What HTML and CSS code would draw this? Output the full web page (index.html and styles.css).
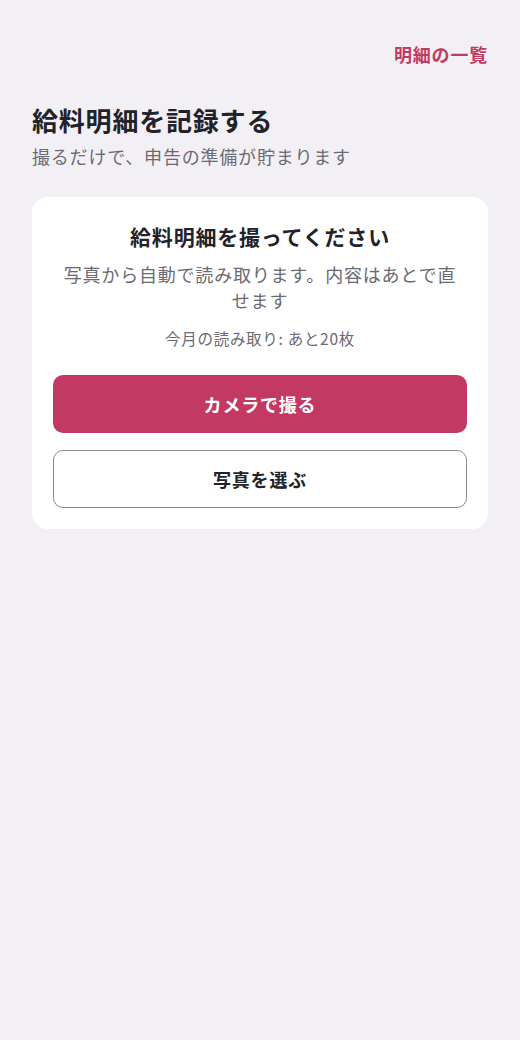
FILE: index.html
```html
<!DOCTYPE html>
<html lang="ja">
<head>
<meta charset="utf-8">
<title>給料明細を記録する</title>
<link rel="stylesheet" href="styles.css">
</head>
<body>
<div class="page">
  <header class="topbar">
    <a class="list-link" href="#">明細の一覧</a>
  </header>
  <section class="intro">
    <h1 class="title">給料明細を記録する</h1>
    <p class="subtitle">撮るだけで、申告の準備が貯まります</p>
  </section>
  <section class="card">
    <h2 class="card-title">給料明細を撮ってください</h2>
    <p class="card-desc">写真から自動で読み取ります。内容はあとで直せます</p>
    <p class="card-count">今月の読み取り: あと20枚</p>
    <div class="actions">
      <button class="btn btn-primary" type="button">カメラで撮る</button>
      <button class="btn btn-secondary" type="button">写真を選ぶ</button>
    </div>
  </section>
</div>
</body>
</html>
```
FILE: styles.css
```css
* { box-sizing: border-box; }
html, body { margin: 0; padding: 0; }
body {
  background: #f3f0f5;
  font-family: "Noto Sans CJK JP", "Noto Sans", sans-serif;
  color: #232229;
}
.page {
  padding: 38px 32px 32px;
}
.topbar {
  display: flex;
  justify-content: flex-end;
  height: 32px;
  align-items: center;
}
.list-link {
  color: #c23a63;
  font-size: 18px;
  font-weight: 700;
  text-decoration: none;
  letter-spacing: 0.8px;
}
.intro {
  margin-top: 32px;
}
.title {
  margin: 0;
  font-size: 26px;
  font-weight: 700;
  line-height: 36px;
  letter-spacing: 0.8px;
}
.subtitle {
  margin: 5px 0 0;
  font-size: 18px;
  line-height: 26px;
  color: #6b6a72;
  letter-spacing: 0.8px;
}
.card {
  margin-top: 28px;
  background: #ffffff;
  border-radius: 16px;
  padding: 23px 21px 21px;
  text-align: center;
}
.card-title {
  margin: 0;
  font-size: 21px;
  font-weight: 700;
  line-height: 32px;
  letter-spacing: 0.8px;
}
.card-desc {
  margin: 9px 0 0;
  font-size: 18px;
  line-height: 26px;
  color: #6b6a72;
  letter-spacing: 0.8px;
  padding: 0 8px;
}
.card-count {
  margin: 14px 0 0;
  font-size: 15.5px;
  line-height: 22px;
  color: #6b6a72;
  letter-spacing: 0.7px;
}
.actions {
  margin-top: 26px;
  display: flex;
  flex-direction: column;
  gap: 17px;
}
.btn {
  display: block;
  width: 100%;
  height: 58px;
  border-radius: 10px;
  font-family: inherit;
  font-size: 18px;
  font-weight: 700;
  letter-spacing: 0.8px;
  cursor: pointer;
}
.btn-primary {
  background: #c23a63;
  color: #ffffff;
  border: none;
}
.btn-secondary {
  background: #ffffff;
  color: #232229;
  border: 1px solid #8c8a90;
}
```
